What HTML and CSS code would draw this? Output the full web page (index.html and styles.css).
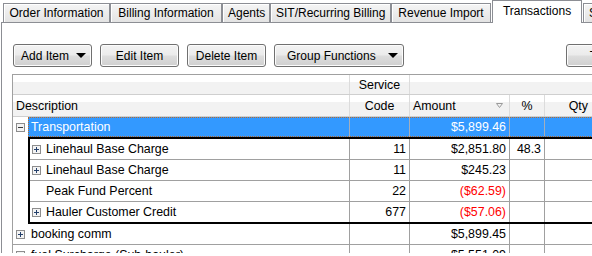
FILE: index.html
```html
<!DOCTYPE html>
<html lang="en">
  <head>
    <meta charset="UTF-8" />
    <title>Transactions</title>
    <link rel="stylesheet" href="styles.css">
  </head>
  <body>
    <div class="tabs">
      <div class="tab tab-order">Order Information</div>
      <div class="tab tab-billing">Billing Information</div>
      <div class="tab tab-agents">Agents</div>
      <div class="tab tab-sit">SIT/Recurring Billing</div>
      <div class="tab tab-revenue">Revenue Import</div>
      <div class="tab active">Transactions</div>
      <div class="tab">Storage</div>
    </div>

    <div class="panel">
      <div class="toolbar">
        <button class="btn btn-drop">Add Item
          <svg width="10" height="5" viewBox="0 0 10 5"><path d="M0 0h10L5 5z" fill="#000"/></svg>
        </button>
        <button class="btn">Edit Item</button>
        <button class="btn">Delete Item</button>
        <button class="btn btn-drop btn-wide">Group Functions
          <svg width="10" height="5" viewBox="0 0 10 5"><path d="M0 0h10L5 5z" fill="#000"/></svg>
        </button>
        <button class="btn btn-far">Totals</button>
      </div>

      <div class="grid">
        <div class="hrow band">
          <div class="h h-desc"></div>
          <div class="h h-code">Service</div>
          <div class="h h-rest"></div>
        </div>
        <div class="hrow">
          <div class="h h-desc">Description</div>
          <div class="h h-code">Code</div>
          <div class="h h-amt">Amount
            <svg width="7" height="5" viewBox="0 0 7 5"><path d="M0.5 0.5h6l-3 4z" fill="none" stroke="#9a9a9a"/></svg>
          </div>
          <div class="h h-pct">%</div>
          <div class="h h-qty">Qty</div>
        </div>

        <!-- expanded group -->
        <div class="row open">
          <div class="exp">
            <svg width="9" height="9" viewBox="0 0 9 9"><rect x="0.5" y="0.5" width="8" height="8" fill="#f3f3f3" stroke="#8d8d8d"/><path d="M2 4.5h5" stroke="#3a3a3a"/></svg>
          </div>
          <div class="cells selected">
            <div class="c desc">Transportation</div>
            <div class="c code"></div>
            <div class="c amt">$5,899.46</div>
            <div class="c pct"></div>
            <div class="c qty"></div>
          </div>
        </div>

        <div class="group">
          <div class="group-indent"></div>
          <div class="group-box">
            <div class="crow">
              <div class="c cdesc">
                <span class="cexp"><svg width="9" height="9" viewBox="0 0 9 9"><rect x="0.5" y="0.5" width="8" height="8" fill="#f3f3f3" stroke="#8d8d8d"/><path d="M2 4.5h5M4.5 2v5" stroke="#24406b"/></svg></span>
                <span class="ctext">Linehaul Base Charge</span>
              </div>
              <div class="c code">11</div>
              <div class="c amt">$2,851.80</div>
              <div class="c pct">48.3</div>
              <div class="c qty"></div>
            </div>
            <div class="crow">
              <div class="c cdesc">
                <span class="cexp"><svg width="9" height="9" viewBox="0 0 9 9"><rect x="0.5" y="0.5" width="8" height="8" fill="#f3f3f3" stroke="#8d8d8d"/><path d="M2 4.5h5M4.5 2v5" stroke="#24406b"/></svg></span>
                <span class="ctext">Linehaul Base Charge</span>
              </div>
              <div class="c code">11</div>
              <div class="c amt">$245.23</div>
              <div class="c pct"></div>
              <div class="c qty"></div>
            </div>
            <div class="crow">
              <div class="c cdesc">
                <span class="cexp"></span>
                <span class="ctext">Peak Fund Percent</span>
              </div>
              <div class="c code">22</div>
              <div class="c amt neg">($62.59)</div>
              <div class="c pct"></div>
              <div class="c qty"></div>
            </div>
            <div class="crow">
              <div class="c cdesc">
                <span class="cexp"><svg width="9" height="9" viewBox="0 0 9 9"><rect x="0.5" y="0.5" width="8" height="8" fill="#f3f3f3" stroke="#8d8d8d"/><path d="M2 4.5h5M4.5 2v5" stroke="#24406b"/></svg></span>
                <span class="ctext">Hauler Customer Credit</span>
              </div>
              <div class="c code">677</div>
              <div class="c amt neg">($57.06)</div>
              <div class="c pct"></div>
              <div class="c qty"></div>
            </div>
          </div>
        </div>

        <div class="row">
          <div class="exp">
            <svg width="9" height="9" viewBox="0 0 9 9"><rect x="0.5" y="0.5" width="8" height="8" fill="#f3f3f3" stroke="#8d8d8d"/><path d="M2 4.5h5M4.5 2v5" stroke="#24406b"/></svg>
          </div>
          <div class="cells">
            <div class="c desc">booking comm</div>
            <div class="c code"></div>
            <div class="c amt">$5,899.45</div>
            <div class="c pct"></div>
            <div class="c qty"></div>
          </div>
        </div>

        <div class="row">
          <div class="exp">
            <svg width="9" height="9" viewBox="0 0 9 9"><rect x="0.5" y="0.5" width="8" height="8" fill="#f3f3f3" stroke="#8d8d8d"/><path d="M2 4.5h5M4.5 2v5" stroke="#24406b"/></svg>
          </div>
          <div class="cells">
            <div class="c desc">fuel Surcharge (Sub-hauler)</div>
            <div class="c code"></div>
            <div class="c amt">$5,551.09</div>
            <div class="c pct"></div>
            <div class="c qty"></div>
          </div>
        </div>
      </div>
    </div>
  </body>
</html>
```

FILE: styles.css
```css
:root {
  --tab-border: #8c8e94;
  --grid-line: #a0a0a0;
  --head-line: #cfcfcf;
  --select-color: #3399ff;
}

* {
  margin: 0;
  padding: 0;
  box-sizing: border-box;
}

body {
  font-family: "Liberation Sans", Arial, sans-serif;
  font-size: 12px;
  color: #000;
  background-color: #fff;
  width: 592px;
  height: 256px;
  overflow: hidden;
}

/* tab strip */
.tabs {
  display: flex;
  align-items: flex-end;
  height: 22px;
  padding-left: 3px;
}

.tab {
  flex-shrink: 0;
  height: 19px;
  padding: 0 5px;
  line-height: 18px;
  text-align: center;
  white-space: nowrap;
  border: 1px solid var(--tab-border);
  border-bottom: none;
  background: linear-gradient(#f5f5f5, #e3e3e3);
  box-shadow: inset 1px 1px 0 #fff;
}

.tab-order {
  width: 107px;
}

.tab-billing {
  width: 112px;
}

.tab-agents {
  width: 48px;
}

.tab-sit {
  width: 121px;
}

.tab-revenue {
  width: 100px;
}

.tab.active {
  position: relative;
  z-index: 1;
  width: 90px;
  height: 23px;
  margin: 0 1px -1px 1px;
  line-height: 20px;
  background: #fff;
  box-shadow: none;
}

.panel {
  width: 720px;
  height: 231px;
  margin-left: 1px;
  overflow: hidden;
  border-left: 1px solid var(--tab-border);
  border-top: 1px solid var(--tab-border);
}

/* toolbar */
.toolbar {
  display: flex;
  gap: 8px;
  padding: 21px 0 0 11px;
}

.btn {
  flex-shrink: 0;
  width: 79px;
  height: 23px;
  font-family: inherit;
  font-size: 12px;
  color: #000;
  border: 1px solid #707070;
  border-radius: 3px;
  background: linear-gradient(#f3f3f3 0%, #ebebeb 48%, #dddddd 52%, #d0d0d0 100%);
  box-shadow: inset 0 0 0 1px #fcfcfc;
}

.btn-drop {
  display: flex;
  align-items: center;
  justify-content: space-between;
  padding: 0 5px 0 7px;
}

.btn-wide {
  width: 130px;
  padding-left: 12px;
}

.btn-far {
  margin-left: 154px;
}

/* grid */
.grid {
  margin: 7px 0 0 10px;
  border-left: 1px solid var(--grid-line);
  border-top: 1px solid var(--grid-line);
  font-size: 12.4px;
}

.hrow {
  display: flex;
  height: 22px;
  border-bottom: 1px solid var(--head-line);
  background: linear-gradient(#fff 0, #fff 35%, #f2f2f2 35%, #f2f2f2 100%);
}

.hrow.band {
  height: 20px;
}

.h {
  flex-shrink: 0;
  display: flex;
  align-items: center;
  border-right: 1px solid #dcdcdc;
  white-space: nowrap;
}

.h-desc {
  width: 337px;
  padding-left: 3px;
}

.h-code {
  width: 60px;
  justify-content: center;
}

.h-rest {
  width: 200px;
  border-right: none;
}

.h-amt {
  width: 100px;
  justify-content: space-between;
  padding: 0 6px 0 3px;
}

.h-pct {
  width: 35px;
  justify-content: center;
}

.h-qty {
  width: 48px;
  justify-content: flex-end;
  padding-right: 4px;
}

.row {
  display: flex;
  height: 21px;
  border-bottom: 1px solid var(--grid-line);
}

.row.open {
  height: 20px;
  border-bottom: none;
}

.exp {
  flex-shrink: 0;
  width: 15px;
  display: flex;
  align-items: center;
  padding-left: 3px;
}

.exp svg,
.cexp svg {
  display: block;
}

.cells {
  display: flex;
}

.cells.selected {
  color: #fff;
  background-color: var(--select-color);
  outline: 1px dotted #b86a2a;
  outline-offset: -1px;
}

.cells.selected .c {
  border-right-color: #a3aebd;
}

.c {
  flex-shrink: 0;
  display: flex;
  align-items: center;
  white-space: nowrap;
  border-right: 1px solid var(--grid-line);
}

.desc {
  width: 322px;
  padding-left: 3px;
}

.code {
  width: 60px;
  justify-content: flex-end;
  padding-right: 3px;
}

.amt {
  width: 100px;
  justify-content: flex-end;
  padding-right: 3px;
}

.pct {
  width: 35px;
  justify-content: flex-end;
  padding-right: 3px;
}

.qty {
  width: 60px;
}

.neg {
  color: #ff0000;
}

/* child rows of an expanded group */
.group {
  display: flex;
}

.group-indent {
  flex-shrink: 0;
  width: 15px;
}

.group-box {
  border: 2px solid #000;
  border-right: none;
}

.crow {
  display: flex;
  height: 21px;
  border-bottom: 1px solid var(--grid-line);
}

.crow:last-child {
  height: 20px;
  border-bottom: none;
}

.cdesc {
  width: 320px;
}

.cexp {
  flex-shrink: 0;
  width: 14px;
  padding-left: 2px;
}

.ctext {
  padding-left: 2px;
}
```
